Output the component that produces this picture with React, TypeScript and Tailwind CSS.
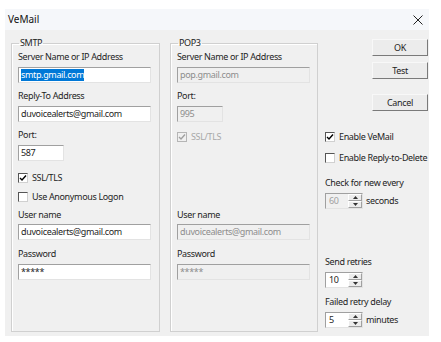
import React from "react"

const font = "font-['Noto_Sans',sans-serif]"

function TextBox({ value, width = "w-[133px]", disabled = false, selected = false, mt = "" }: { value: string; width?: string; disabled?: boolean; selected?: boolean; mt?: string }) {
  return (
    <div
      className={`${width} ${mt} h-[16px] flex items-center pl-[2px] border border-t-[#a0a0a0] border-l-[#a0a0a0] border-r-[#e3e3e3] border-b-[#e3e3e3] ${
        disabled ? "bg-[#f0f0f0] text-[#8d8d8d]" : "bg-white text-[#1e1e1e]"
      }`}
    >
      {selected ? <span className="bg-[#0078d7] text-white leading-[12px]">{value}</span> : <span className="leading-[12px]">{value}</span>}
    </div>
  )
}

function Check({ label, checked, disabled = false, mt = "" }: { label: string; checked: boolean; disabled?: boolean; mt?: string }) {
  return (
    <div className={`flex items-center h-[14px] ${mt}`}>
      <div
        className={`w-[10px] h-[10px] shrink-0 border flex items-center justify-center ${
          disabled ? "border-[#b5b5b5] bg-[#f0f0f0]" : "border-t-[#555] border-l-[#555] border-r-[#d0d0d0] border-b-[#d0d0d0] bg-white"
        }`}
      >
        {checked && (
          <svg width="8" height="8" viewBox="0 0 8 8">
            <path d="M1 4 L3 6 L7 1.5" fill="none" stroke={disabled ? "#a0a0a0" : "#000"} strokeWidth="1.4" />
          </svg>
        )}
      </div>
      <span className={`ml-[4px] leading-[14px] ${disabled ? "text-[#a8a8a8]" : "text-[#1e1e1e]"}`}>{label}</span>
    </div>
  )
}

function Label({ text, mt = "", disabled = false }: { text: string; mt?: string; disabled?: boolean }) {
  return <div className={`h-[14px] leading-[14px] ${mt} ${disabled ? "text-[#a8a8a8]" : "text-[#1e1e1e]"}`}>{text}</div>
}

function Arrow({ up }: { up: boolean }) {
  return (
    <div className="flex-1 flex items-center justify-center border border-t-white border-l-white border-r-[#a0a0a0] border-b-[#a0a0a0] bg-[#ececec]">
      <svg width="5" height="3" viewBox="0 0 5 3">
        <path d={up ? "M0 3 L2.5 0 L5 3 Z" : "M0 0 L2.5 3 L5 0 Z"} fill="#333" />
      </svg>
    </div>
  )
}

function Spinner({ value, unit, disabled = false, mt = "" }: { value: string; unit?: string; disabled?: boolean; mt?: string }) {
  return (
    <div className={`flex items-center ${mt}`}>
      <div className="flex h-[16px] border border-t-[#a0a0a0] border-l-[#a0a0a0] border-r-[#e3e3e3] border-b-[#e3e3e3]">
        <div className={`w-[22px] flex items-center pl-[3px] ${disabled ? "bg-[#f0f0f0] text-[#a0a0a0]" : "bg-white text-[#1e1e1e]"}`}>{value}</div>
        <div className="w-[14px] flex flex-col">
          <Arrow up />
          <Arrow up={false} />
        </div>
      </div>
      {unit && <span className="ml-[3px] text-[#1e1e1e]">{unit}</span>}
    </div>
  )
}

function Button({ label, mt = "" }: { label: string; mt?: string }) {
  return (
    <div
      className={`${mt} w-[56px] h-[17px] flex items-center justify-center bg-[#ececec] border border-t-[#f8f8f8] border-l-[#f8f8f8] border-r-[#7a7a7a] border-b-[#7a7a7a] text-[#1e1e1e]`}
    >
      {label}
    </div>
  )
}

export default function App() {
  return (
    <div className={`w-[441px] h-[342px] bg-white pt-[9px] text-[9px] tracking-[-0.35px] whitespace-nowrap ${font}`}>
      {/* Title bar */}
      <div className="ml-[5px] w-[424px] h-[21px] bg-[#f5f7fa] flex items-center justify-between pl-[3px] pr-[6px]">
        <span className="text-[10px] tracking-normal text-[#111]">VeMail</span>
        <svg width="10" height="10" viewBox="0 0 10 10">
          <path d="M0.5 0.5 L9.5 9.5 M9.5 0.5 L0.5 9.5" stroke="#222" strokeWidth="1" />
        </svg>
      </div>

      {/* Body */}
      <div className="ml-[5px] w-[424px] h-[306px] bg-[#f0f0f0] flex pl-[6px] pt-[6px]">
        {/* SMTP */}
        <fieldset className="w-[149px] h-[296px] border border-[#d0d0d0] shadow-[inset_1px_1px_0_#fff] px-[6px] py-0 m-0 min-w-0">
          <legend className="ml-[1px] px-[1px] h-[14px] leading-[14px] text-[#1e1e1e]">SMTP</legend>
          <Label text="Server Name or IP Address" />
          <TextBox value="smtp.gmail.com" selected mt="mt-[3px]" />
          <Label text="Reply-To Address" mt="mt-[6px]" />
          <TextBox value="duvoicealerts@gmail.com" mt="mt-[3px]" />
          <Label text="Port:" mt="mt-[6px]" />
          <TextBox value="587" width="w-[46px]" mt="mt-[3px]" />
          <Check label="SSL/TLS" checked mt="mt-[10px]" />
          <Check label="Use Anonymous Logon" checked={false} mt="mt-[5px]" />
          <Label text="User name" mt="mt-[4px]" />
          <TextBox value="duvoicealerts@gmail.com" mt="mt-[2px]" />
          <Label text="Password" mt="mt-[7px]" />
          <TextBox value="*****" mt="mt-[3px]" />
        </fieldset>

        {/* POP3 */}
        <fieldset className="ml-[10px] w-[148px] h-[296px] border border-[#d0d0d0] shadow-[inset_1px_1px_0_#fff] px-[6px] py-0 m-0 min-w-0">
          <legend className="ml-[1px] px-[1px] h-[14px] leading-[14px] text-[#1e1e1e]">POP3</legend>
          <Label text="Server Name or IP Address" />
          <TextBox value="pop.gmail.com" disabled mt="mt-[3px]" />
          <Label text="Port:" mt="mt-[6px]" />
          <TextBox value="995" width="w-[46px]" disabled mt="mt-[3px]" />
          <Check label="SSL/TLS" checked disabled mt="mt-[8px]" />
          <Label text="User name" mt="mt-[64px]" />
          <TextBox value="duvoicealerts@gmail.com" disabled mt="mt-[2px]" />
          <Label text="Password" mt="mt-[7px]" />
          <TextBox value="*****" disabled mt="mt-[3px]" />
        </fieldset>

        {/* Right column */}
        <div className="ml-[7px] w-[104px] flex flex-col pt-[3px]">
          <div className="flex flex-col items-end pr-[1px]">
            <Button label="OK" />
            <Button label="Test" mt="mt-[6px]" />
            <Button label="Cancel" mt="mt-[15px]" />
          </div>
          <Check label="Enable VeMail" checked mt="mt-[19px]" />
          <Check label="Enable Reply-to-Delete" checked={false} mt="mt-[7px]" />
          <Label text="Check for new every" mt="mt-[11px]" />
          <Spinner value="60" unit="seconds" disabled mt="mt-[3px]" />
          <Label text="Send retries" mt="mt-[46px]" />
          <Spinner value="10" mt="mt-[3px]" />
          <Label text="Failed retry delay" mt="mt-[7px]" />
          <Spinner value="5" unit="minutes" mt="mt-[3px]" />
        </div>
      </div>
    </div>
  )
}
